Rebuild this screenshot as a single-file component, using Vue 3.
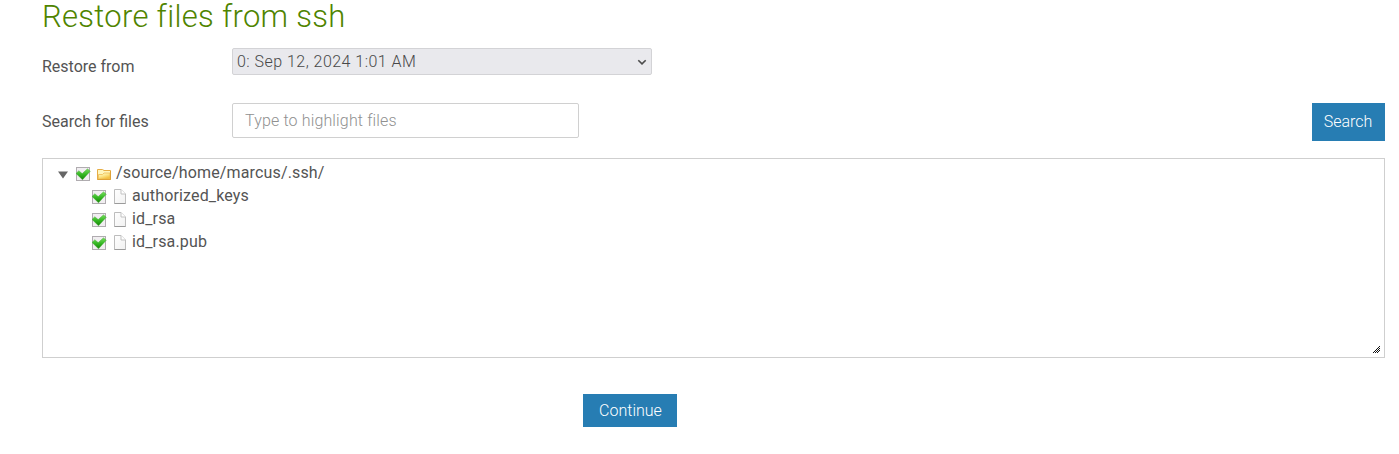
<script setup>
import { ref } from 'vue'

const query = ref('')
const backup = ref(0)
const files = ['authorized_keys', 'id_rsa', 'id_rsa.pub']
</script>

<template>
  <main class="page">
    <svg class="defs" width="0" height="0" aria-hidden="true">
      <defs>
        <linearGradient id="tick-fill" x1="0" y1="0" x2="0" y2="1">
          <stop offset="0" stop-color="#7add60" />
          <stop offset="0.5" stop-color="#36b924" />
          <stop offset="1" stop-color="#168307" />
        </linearGradient>
        <linearGradient id="folder-fill" x1="0" y1="0" x2="0.6" y2="1">
          <stop offset="0" stop-color="#fffbd8" />
          <stop offset="0.5" stop-color="#fce88f" />
          <stop offset="1" stop-color="#f3bd3b" />
        </linearGradient>
        <linearGradient id="paper-fill" x1="0" y1="0" x2="1" y2="1">
          <stop offset="0" stop-color="#ffffff" />
          <stop offset="1" stop-color="#f1f1f1" />
        </linearGradient>
        <symbol id="tick" viewBox="0 0 16 16">
          <rect x="1.5" y="1.5" width="13" height="13" fill="#f1eef1" stroke="#b0acb0" />
          <path d="M1 7.4 3.8 4.7 7.2 7.6 12.5 2.8 15.3 5.2 7.5 13.8Z" fill="url(#tick-fill)" stroke="#42a934" stroke-width=".4" />
        </symbol>
        <symbol id="folder" viewBox="0 0 16 16">
          <path d="M1.5 13.5V3.5H6.5L8 4.5H14.5V13.5Z" fill="#fff6bd" stroke="#e6ad45" />
          <path d="M2.5 13V8.5H6.5L8 7H14V13Z" fill="url(#folder-fill)" stroke="#edbd54" stroke-width=".8" />
          <path d="M1.5 13.5H14.5V5" fill="none" stroke="#dfa237" />
        </symbol>
        <symbol id="paper" viewBox="0 0 16 16">
          <path d="M2.5 .5H9L13.5 5V14.5H2.5Z" fill="url(#paper-fill)" stroke="#bdbdbd" />
          <path d="M9 .5V5H13.5" fill="#fff" stroke="#c2c2c2" />
          <path d="M2.5 14.5H13.5" stroke="#9b9b9b" />
        </symbol>
      </defs>
    </svg>

    <h1>Restore files from ssh</h1>

    <div class="row from-row">
      <label for="backup">Restore from</label>
      <div class="select-box">
        <select id="backup" v-model="backup">
          <option :value="0">0: Sep 12, 2024 1:01 AM</option>
        </select>
        <svg class="chevron" width="10" height="7" viewBox="0 0 10 7">
          <path d="M1.3 1.2 5 4.9 8.7 1.2" fill="none" stroke="#4c4c4c" stroke-width="1.6" />
        </svg>
      </div>
    </div>

    <div class="row search-row">
      <label for="query">Search for files</label>
      <input id="query" v-model="query" type="text" placeholder="Type to highlight files" />
      <button class="search" type="button"><span>Search</span></button>
    </div>

    <section class="tree">
      <div class="node root">
        <svg class="arrow" width="10" height="8"><path d="M0 .5H10L5 7.5Z" fill="#666" /></svg>
        <svg class="check" width="16" height="16"><use href="#tick" /></svg>
        <svg class="kind" width="16" height="16"><use href="#folder" /></svg>
        <span>/source/home/marcus/.ssh/</span>
      </div>
      <div v-for="file in files" :key="file" class="node leaf">
        <svg class="check" width="16" height="16"><use href="#tick" /></svg>
        <svg class="kind" width="16" height="16"><use href="#paper" /></svg>
        <span>{{ file }}</span>
      </div>
      <svg class="grip" width="7" height="7" viewBox="0 0 7 7" shape-rendering="crispEdges">
        <path
          d="M6 0h1v1h-1zM5 1h1v1h-1zM4 2h1v1h-1zM3 3h1v1h-1zM2 4h1v1h-1zM1 5h1v1h-1zM0 6h1v1h-1zM6 2h1v1h-1zM5 3h1v1h-1zM4 4h1v1h-1zM3 5h1v1h-1zM2 6h1v1h-1zM6 4h1v1h-1zM5 5h1v1h-1zM4 6h1v1h-1z"
          fill="#111"
        />
      </svg>
    </section>

    <div class="actions">
      <button class="continue" type="button"><span>Continue</span></button>
    </div>
  </main>
</template>

<style>
body {
  background: #fff;
  overflow: hidden;
}
</style>

<style scoped>
.page {
  box-sizing: border-box;
  height: 454px;
  padding: 0 14px 0 42px;
  color: #545454;
  font: 400 16px/23px Roboto, "Liberation Sans", sans-serif;
}
.defs { position: absolute; }
h1 {
  margin: 0;
  height: 48px;
  color: #4f8400;
  font-size: 31px;
  font-weight: 300;
  line-height: 34px;
  letter-spacing: 0.3px;
  white-space: nowrap;
}
.row { display: flex; align-items: flex-start; }
label { width: 190px; padding-top: 7px; white-space: nowrap; }
.from-row { height: 55px; }
.select-box { position: relative; width: 420px; height: 27px; }
select {
  appearance: none;
  box-sizing: border-box;
  width: 100%;
  height: 27px;
  margin: 0;
  padding: 0 24px 0 4px;
  border: 1px solid #d3d3d6;
  border-radius: 2px;
  background: #e9e9ed;
  color: #484848;
  font: inherit;
  font-weight: 300;
  letter-spacing: 0.47px;
}
.chevron { position: absolute; right: 5px; top: 11px; }
.search-row { height: 55px; }
input {
  box-sizing: border-box;
  width: 347px;
  height: 35px;
  margin: 0;
  padding: 0 12px;
  border: 1px solid #d0d0d0;
  border-radius: 2px;
  color: #545454;
  font: inherit;
  font-weight: 300;
  letter-spacing: 0.15px;
}
input::placeholder { color: #909090; opacity: 1; }
button {
  border: 0;
  border-radius: 0;
  padding: 0;
  background: #277db3;
  color: #fff;
  font: inherit;
  font-weight: 300;
}
.search { width: 73px; height: 38px; margin-left: auto; padding: 0 1px 2px 0; }
.tree {
  position: relative;
  box-sizing: border-box;
  height: 200px;
  padding: 2px 0 0 15px;
  border: 1px solid #cfcfcf;
  letter-spacing: 0.15px;
}
.node { display: flex; align-items: center; height: 23px; white-space: nowrap; }
.arrow { margin: 5px 7px 0 0; }
.check { margin-top: 3px; }
.kind { margin: 3px 4px 0 5px; }
.leaf { padding-left: 33px; }
.grip { position: absolute; right: 4px; bottom: 4px; }
.actions { display: flex; padding: 36px 0 0 541px; }
.continue { width: 94px; height: 33px; padding-left: 1px; }
</style>
